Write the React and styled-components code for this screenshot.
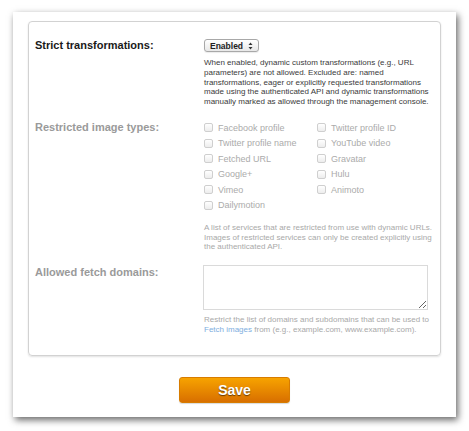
import React from 'react';
import styled, { createGlobalStyle } from 'styled-components';

const GlobalStyle = createGlobalStyle`
  html, body {
    margin: 0;
    padding: 0;
    background: #fff;
    font-family: "Liberation Sans", Arial, Helvetica, sans-serif;
  }
`;

const services = [
  'Facebook profile',
  'Twitter profile ID',
  'Twitter profile name',
  'YouTube video',
  'Fetched URL',
  'Gravatar',
  'Google+',
  'Hulu',
  'Vimeo',
  'Animoto',
  'Dailymotion',
];

const SelectArrows = () => (
  <svg width="5" height="8" viewBox="0 0 5 8">
    <path d="M2.5 0.5 L4.5 3 L0.5 3 Z" fill="#333" />
    <path d="M2.5 7.5 L4.5 5 L0.5 5 Z" fill="#333" />
  </svg>
);

const App = () => {
  return (
    <>
      <GlobalStyle />
      <Page>
        <Panel>
          <Card>
            <Row>
              <Label>Strict transformations:</Label>
              <Field>
                <Select>
                  <span>Enabled</span>
                  <SelectArrows />
                </Select>
                <Hint $top={6}>
                  When enabled, dynamic custom transformations (e.g., URL<br />
                  parameters) are not allowed. Excluded are: named<br />
                  transformations, eager or explicitly requested transformations<br />
                  made using the authenticated API and dynamic transformations<br />
                  manually marked as allowed through the management console.
                </Hint>
              </Field>
            </Row>

            <Row>
              <Label $muted $lineHeight={15.5}>Restricted image types:</Label>
              <Field>
                <CheckGrid>
                  {services.map((name) => (
                    <CheckItem key={name}>
                      <CheckBox />
                      {name}
                    </CheckItem>
                  ))}
                </CheckGrid>
                <Hint $muted $top={10}>
                  A list of services that are restricted from use with dynamic URLs.<br />
                  Images of restricted services can only be created explicitly using<br />
                  the authenticated API.
                </Hint>
              </Field>
            </Row>

            <Row>
              <Label $muted $lineHeight={15}>Allowed fetch domains:</Label>
              <Field>
                <Domains />
                <Hint $muted $top={5}>
                  Restrict the list of domains and subdomains that can be used to<br />
                  <Link>Fetch images</Link> from (e.g., example.com, www.example.com).
                </Hint>
              </Field>
            </Row>
          </Card>

          <SaveButton>Save</SaveButton>
        </Panel>
      </Page>
    </>
  );
};

export default App;

const Page = styled.div`
  width: 469px;
  height: 431px;
  padding: 12px 0 0 13px;
  box-sizing: border-box;
`;

const Panel = styled.div`
  width: 443px;
  height: 405px;
  box-sizing: border-box;
  padding: 9px 15px 0 15px;
  background: #fff;
  box-shadow: 2px 3px 7px rgba(0, 0, 0, 0.6);
  display: flex;
  flex-direction: column;
  align-items: center;
`;

const Card = styled.div`
  align-self: stretch;
  box-sizing: border-box;
  height: 335px;
  padding: 17px 12px 0 6px;
  border: 1px solid #d2d2d2;
  border-radius: 4px;
  box-shadow: 0 1px 2px rgba(0, 0, 0, 0.12);
  display: flex;
  flex-direction: column;
  gap: 13px;
`;

const Row = styled.div`
  display: grid;
  grid-template-columns: 169px 1fr;
`;

const Label = styled.div`
  font-size: 11px;
  font-weight: bold;
  line-height: ${(p) => p.$lineHeight || 13}px;
  color: ${(p) => (p.$muted ? '#9a9a9a' : '#1a1a1a')};
`;

const Field = styled.div`
  display: flex;
  flex-direction: column;
  align-items: flex-start;
`;

const Select = styled.div`
  box-sizing: border-box;
  width: 55px;
  height: 13px;
  padding: 0 5px 0 5px;
  display: flex;
  align-items: center;
  justify-content: space-between;
  border: 1px solid #a8a8a8;
  border-radius: 3px;
  background: linear-gradient(#ffffff, #e8e8e8);
  box-shadow: 0 1px 1px rgba(0, 0, 0, 0.08);
  font-size: 8.5px;
  font-weight: bold;
  color: #222;
`;

const Hint = styled.div`
  margin-top: ${(p) => p.$top}px;
  font-size: 8px;
  line-height: 9.75px;
  white-space: nowrap;
  color: ${(p) => (p.$muted ? '#a9a9a9' : '#3a3a3a')};
`;

const CheckGrid = styled.div`
  display: grid;
  grid-template-columns: 113px auto;
  grid-auto-rows: 15.5px;
`;

const CheckItem = styled.label`
  display: flex;
  align-items: center;
  gap: 5px;
  font-size: 9px;
  color: #ababab;
`;

const CheckBox = styled.span`
  box-sizing: border-box;
  width: 9px;
  height: 9px;
  border: 1px solid #cfcfcf;
  border-radius: 2px;
  background: linear-gradient(#ffffff, #ededed);
`;

const Domains = styled.textarea`
  box-sizing: border-box;
  width: 225px;
  height: 45px;
  margin: 0 0 0 -1px;
  border: 1px solid #dadada;
  background: #fff;
  font-family: inherit;
  font-size: 9px;
  outline: none;
`;

const Link = styled.span`
  color: #7eaee0;
`;

const SaveButton = styled.button`
  margin-top: 21px;
  width: 111px;
  height: 26px;
  border: 1px solid #d77c00;
  border-radius: 3px;
  background: linear-gradient(#f7a300, #d86f00);
  box-shadow: 0 1px 1px rgba(0, 0, 0, 0.15);
  font-family: "Liberation Sans", Arial, Helvetica, sans-serif;
  font-size: 14px;
  font-weight: bold;
  color: #fff;
  text-shadow: 0 1px 1px rgba(0, 0, 0, 0.55);
  cursor: pointer;
`;
